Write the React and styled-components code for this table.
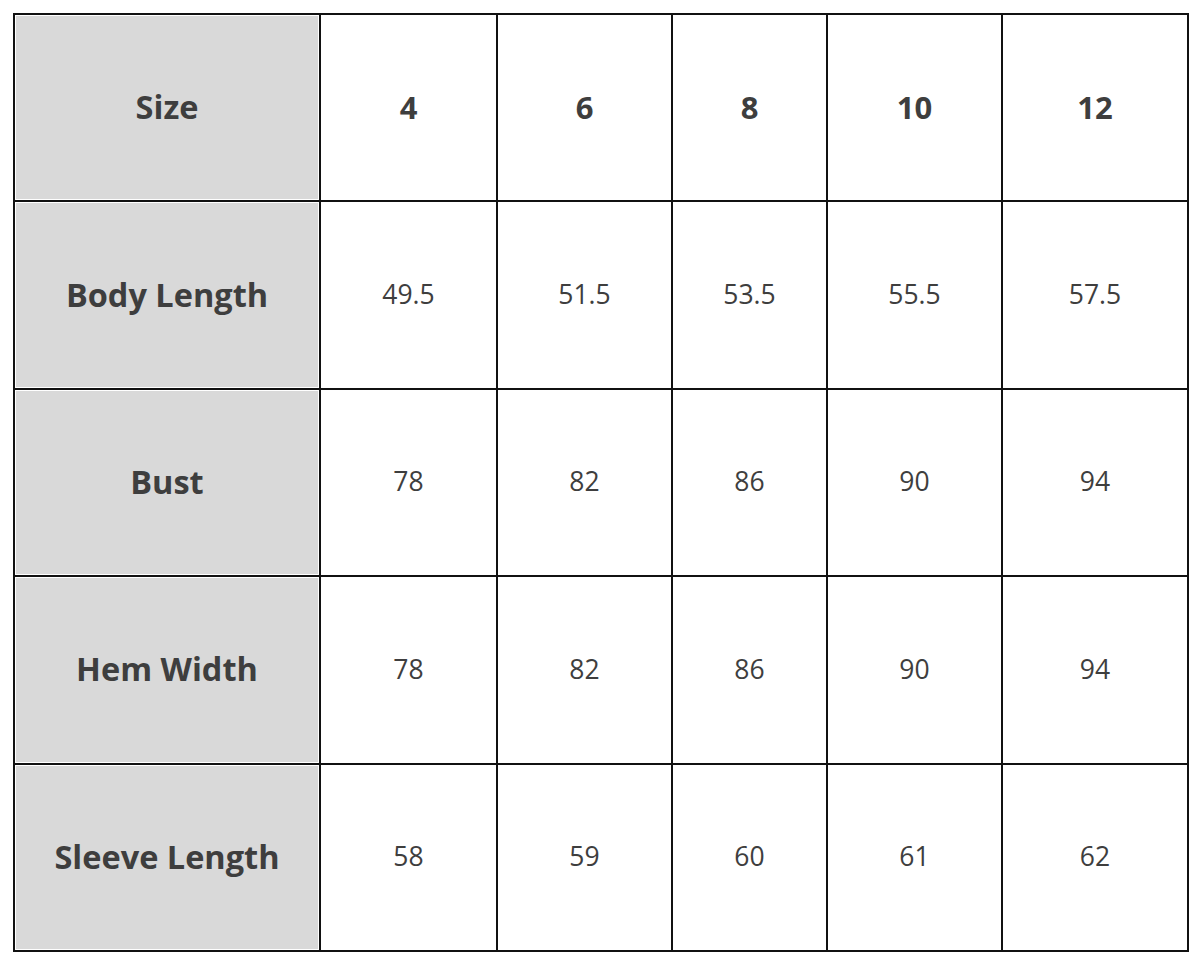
import { createGlobalStyle } from "styled-components";
import styled from "styled-components";

const GlobalStyle = createGlobalStyle`
  html, body {
    margin: 0;
    background: #ffffff;
    font-family: "Open Sans", "Noto Sans", "DejaVu Sans", sans-serif;
  }
`;

const Page = styled.div`
  padding: 13px 0 0 13px;
`;

const Table = styled.table`
  border-collapse: collapse;
  width: 1174px;
  table-layout: fixed;
  border: 2px solid #111;
`;

const Row = styled.tr`
  height: 187.4px;
`;

const Cell = styled.td`
  border: 2px solid #111;
  text-align: center;
  vertical-align: middle;
  color: #3e3e3e;
  font-size: ${(p) => (p.$head ? "32.5px" : p.$top ? "31px" : "26.5px")};
  font-weight: ${(p) => (p.$head || p.$top ? 700 : 400)};
  background: ${(p) => (p.$head ? "#d9d9d9" : "#fff")};
  box-shadow: ${(p) => (p.$head ? "inset 0 0 0 1px #fff" : "none")};
  padding: 0 0 2px;
`;

const widths = [306, 177, 175, 155, 175, 186];

const rows = [
  ["Size", "4", "6", "8", "10", "12"],
  ["Body Length", "49.5", "51.5", "53.5", "55.5", "57.5"],
  ["Bust", "78", "82", "86", "90", "94"],
  ["Hem Width", "78", "82", "86", "90", "94"],
  ["Sleeve Length", "58", "59", "60", "61", "62"],
];

export default function App() {
  return (
    <>
      <GlobalStyle />
      <Page>
        <Table>
          <colgroup>
            {widths.map((w, i) => (
              <col key={i} style={{ width: w }} />
            ))}
          </colgroup>
          <tbody>
            {rows.map((r, ri) => (
              <Row key={ri}>
                {r.map((c, ci) => (
                  <Cell key={ci} $head={ci === 0} $top={ri === 0}>
                    {c}
                  </Cell>
                ))}
              </Row>
            ))}
          </tbody>
        </Table>
      </Page>
    </>
  );
}
